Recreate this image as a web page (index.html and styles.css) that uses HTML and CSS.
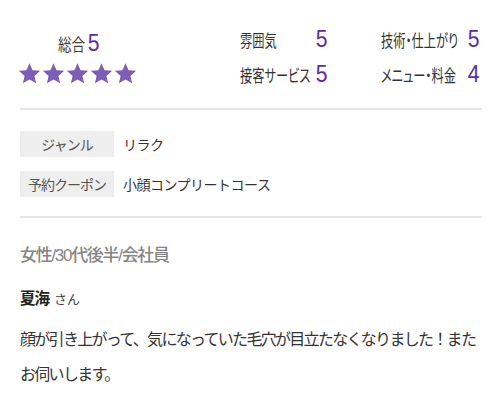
FILE: index.html
```html
<!DOCTYPE html>
<html lang="ja">
<head>
<meta charset="utf-8">
<link rel="stylesheet" href="styles.css">
</head>
<body>
<div class="review">
  <section class="summary">
    <div class="overall">
      <div class="overall-title"><span class="label">総合</span><span class="num">5</span></div>
      <div class="stars">
        <svg viewBox="0 0 24 24"><path d="M12 1.2l3.2 7.3 7.9.7-6 5.3 1.8 7.8L12 18.2l-6.9 4.1 1.8-7.8-6-5.3 7.9-.7z"/></svg>
        <svg viewBox="0 0 24 24"><path d="M12 1.2l3.2 7.3 7.9.7-6 5.3 1.8 7.8L12 18.2l-6.9 4.1 1.8-7.8-6-5.3 7.9-.7z"/></svg>
        <svg viewBox="0 0 24 24"><path d="M12 1.2l3.2 7.3 7.9.7-6 5.3 1.8 7.8L12 18.2l-6.9 4.1 1.8-7.8-6-5.3 7.9-.7z"/></svg>
        <svg viewBox="0 0 24 24"><path d="M12 1.2l3.2 7.3 7.9.7-6 5.3 1.8 7.8L12 18.2l-6.9 4.1 1.8-7.8-6-5.3 7.9-.7z"/></svg>
        <svg viewBox="0 0 24 24"><path d="M12 1.2l3.2 7.3 7.9.7-6 5.3 1.8 7.8L12 18.2l-6.9 4.1 1.8-7.8-6-5.3 7.9-.7z"/></svg>
      </div>
    </div>
    <div class="scores">
      <div class="score"><span class="label">雰囲気</span><span class="num">5</span></div>
      <div class="score"><span class="label">技術・仕上がり</span><span class="num">5</span></div>
      <div class="score"><span class="label">接客サービス</span><span class="num">5</span></div>
      <div class="score"><span class="label">メニュー・料金</span><span class="num">4</span></div>
    </div>
  </section>
  <section class="info">
    <div class="info-row"><span class="info-key">ジャンル</span><span class="info-val">リラク</span></div>
    <div class="info-row"><span class="info-key">予約クーポン</span><span class="info-val">小顔コンプリートコース</span></div>
  </section>
  <section class="body">
    <div class="profile">女性/30代後半/会社員</div>
    <div class="name"><strong>夏海</strong><span class="san">さん</span></div>
    <p class="comment">顔が引き上がって、気になっていた毛穴が目立たなくなりました！またお伺いします。</p>
  </section>
</div>
</body>
</html>
```

FILE: styles.css
```css
* { box-sizing: border-box; }
html, body { margin: 0; padding: 0; background: #fff; }
body {
  font-family: "Liberation Sans", "Noto Sans CJK JP", sans-serif;
  color: #333;
}
.review { padding: 0 18px 0 20px; }

.summary {
  display: flex;
  align-items: flex-start;
  padding: 29px 0 22px;
  border-bottom: 2px solid #e6e6e6;
}
.overall {
  width: 114px;
  display: flex;
  flex-direction: column;
  align-items: center;
}
.overall-title {
  display: flex;
  align-items: baseline;
  height: 26px;
  padding-left: 4px;
}
.overall-title .label {
  display: inline-block;
  width: 29px;
  font-size: 17px;
  color: #3f3f3f;
  white-space: nowrap;
  transform: scaleX(0.8);
  transform-origin: left center;
}
.num { color: #5b2c9f; font-size: 24px; font-family: "Liberation Sans", sans-serif; transform: scaleX(0.88); display: inline-block; }
.stars { display: flex; gap: 1px; margin-top: 7px; }
.stars svg { width: 23px; height: 23px; fill: #7d5db8; }

.scores {
  margin-left: 106px;
  display: grid;
  grid-template-columns: 88px 99px;
  column-gap: 53px;
  row-gap: 9px;
  margin-top: -4px;
}
.score {
  display: flex;
  align-items: baseline;
  height: 26px;
  white-space: nowrap;
}
.score .label {
  flex: 1 1 0;
  min-width: 0;
  font-size: 17px;
  color: #333;
  font-feature-settings: "palt";
  transform: scaleX(0.72);
  transform-origin: left center;
}
.score .num { flex: none; }

.info {
  padding: 21px 0 19px;
  border-bottom: 2px solid #e6e6e6;
  display: flex;
  flex-direction: column;
  gap: 14px;
}
.info-row { display: flex; align-items: center; }
.info-key {
  width: 94px;
  height: 26px;
  background: #eeeeee;
  color: #555;
  font-size: 14px;
  letter-spacing: -1px;
  display: flex;
  align-items: center;
  justify-content: center;
}
.info-val { margin-left: 9px; font-size: 14px; color: #333; letter-spacing: -0.5px; }

.body { padding-top: 27px; }
.profile { font-size: 17px; color: #858585; line-height: 22px; letter-spacing: -1.3px; font-weight: 500; }
.name { margin-top: 21px; line-height: 22px; display: flex; align-items: baseline; gap: 5px; }
.name strong { font-size: 15.5px; color: #222; letter-spacing: -1px; }
.san { font-size: 13px; color: #444; }
.comment {
  margin: 11px 0 0;
  font-size: 16px;
  line-height: 35px;
  color: #333;
  letter-spacing: -1.7px;
}
```
